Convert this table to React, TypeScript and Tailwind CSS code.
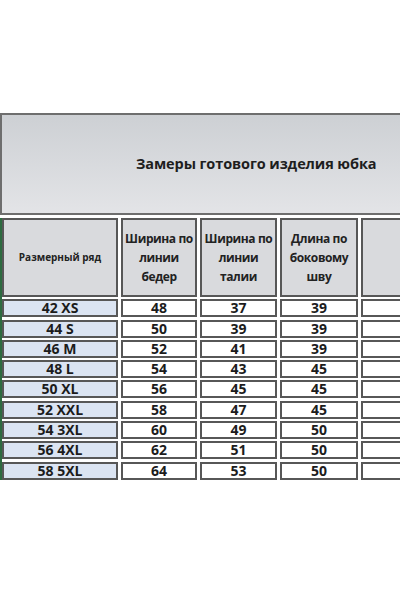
import React from "react";

const rows: [string, number, number, number][] = [
  ["42 XS", 48, 37, 39],
  ["44 S", 50, 39, 39],
  ["46 M", 52, 41, 39],
  ["48 L", 54, 43, 45],
  ["50 XL", 56, 45, 45],
  ["52 XXL", 58, 47, 45],
  ["54 3XL", 60, 49, 50],
  ["56 4XL", 62, 51, 50],
  ["58 5XL", 64, 53, 50],
];

const font = { fontFamily: '"Open Sans", "Noto Sans", sans-serif' };

const cell = "shrink-0 border-2 border-[#575757] flex items-center justify-center";

const HeadCell = ({ w, lines }: { w: string; lines: string[] }) => (
  <div className={`${cell} ${w} bg-[#d9dadd] flex-col text-[12px] leading-[19px] font-bold text-[#222] whitespace-nowrap tracking-[-0.4px]`}>
    {lines.map((l) => (
      <span key={l}>{l}</span>
    ))}
  </div>
);

export default function App() {
  return (
    <div
      className="w-[400px] h-[600px] bg-white overflow-hidden pt-[113px]"
      style={font}
    >
      <div className="w-[520px] h-[102px] border-2 border-[#6e6e6e] bg-gradient-to-b from-[#cdd0d4] to-[#e3e4e7] flex items-center pl-[134px]">
        <span className="text-[14.5px] font-bold text-[#1e1e1e] tracking-[-0.1px]">
          Замеры готового изделия юбка
        </span>
      </div>

      <div className="mt-[3px] border-l-2 border-[#2e6b40] flex flex-col gap-[2.3px] w-[520px]">
        <div className="flex gap-[3px] h-[79px]">
          <div className={`${cell} w-[116px] bg-[#d9dadd] text-[10px] font-bold text-[#222]`}>
            Размерный ряд
          </div>
          <HeadCell w="w-[76px]" lines={["Ширина по", "линии", "бедер"]} />
          <HeadCell w="w-[77px]" lines={["Ширина по", "линии", "талии"]} />
          <HeadCell w="w-[78px]" lines={["Длина по", "боковому", "шву"]} />
          <div className={`${cell} w-[160px] bg-[#d9dadd]`} />
        </div>

        {rows.map(([size, hips, waist, len]) => (
          <div key={size} className="flex gap-[3px] h-[18px] text-[14px] font-bold text-[#1c1c1c] leading-none">
            <div className={`${cell} w-[116px] bg-[#dbe4f2]`}>{size}</div>
            <div className={`${cell} w-[76px] bg-white`}>{hips}</div>
            <div className={`${cell} w-[77px] bg-white`}>{waist}</div>
            <div className={`${cell} w-[78px] bg-white`}>{len}</div>
            <div className={`${cell} w-[160px] bg-white`} />
          </div>
        ))}
      </div>
    </div>
  );
}
